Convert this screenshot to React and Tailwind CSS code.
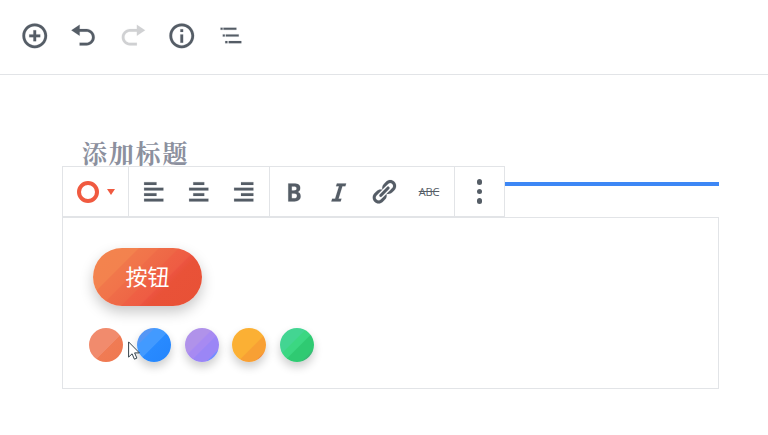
const paths = {
  insert: 'M10 1c-5 0-9 4-9 9s4 9 9 9 9-4 9-9-4-9-9-9zm0 16c-3.9 0-7-3.1-7-7s3.1-7 7-7 7 3.1 7 7-3.1 7-7 7zm1-11H9v3H6v2h3v3h2v-3h3V9h-3V6z',
  undo: 'M12 5H7V2L1 6l6 4V7h5c2.2 0 4 1.8 4 4s-1.8 4-4 4H7v2h5c3.3 0 6-2.7 6-6s-2.7-6-6-6z',
  redo: 'M8 5h5V2l6 4-6 4V7H8c-2.2 0-4 1.8-4 4s1.8 4 4 4h5v2H8c-3.3 0-6-2.7-6-6s2.7-6 6-6z',
  info: 'M10 1c-5 0-9 4-9 9s4 9 9 9 9-4 9-9-4-9-9-9zm0 16c-3.9 0-7-3.1-7-7s3.1-7 7-7 7 3.1 7 7-3.1 7-7 7zM9 5.3h2v1.9H9V5.3zM9 9h2v6H9V9z',
  outline: 'M2.6 4.1h1.5v1.6H2.6V4.1zm2.1 0h9.4v1.6H4.7V4.1zM4.2 9h1.5v1.6H4.2V9zm2.2 0h9.4v1.6H6.4V9zM6 13.9h1.6v1.6H6v-1.6zm2.5 0h9.2v1.6H8.5v-1.6z',
  left: 'M12 5V3H3v2h9zm5 4V7H3v2h14zm-5 4v-2H3v2h9zm5 4v-2H3v2h14z',
  center: 'M14 5V3H6v2h8zm3 4V7H3v2h14zm-3 4v-2H6v2h8zm3 4v-2H3v2h14z',
  right: 'M17 5V3H8v2h9zm0 4V7H3v2h14zm0 4v-2H8v2h9zm0 4v-2H3v2h14z',
  bold: 'M6 4v13h4.54c1.37 0 2.46-.33 3.26-1 .8-.66 1.2-1.58 1.2-2.77 0-.84-.17-1.51-.51-2.01s-.9-.85-1.67-1.03v-.09c.57-.1 1.02-.4 1.36-.9s.51-1.13.51-1.91c0-1.14-.39-1.98-1.17-2.5C12.75 4.26 11.5 4 9.78 4H6zm2.57 5.15V6.26h1.36c.73 0 1.27.11 1.61.32.34.22.51.58.51 1.07 0 .54-.16.92-.47 1.15s-.82.35-1.51.35h-1.5zm0 2.19h1.6c1.44 0 2.16.53 2.16 1.61 0 .6-.17 1.05-.51 1.34s-.86.43-1.57.43H8.57v-3.38z',
  italic: 'M14.78 6h-2.13l-2.8 9h2.12l-.62 2H4.6l.62-2h2.14l2.8-9H8.03l.62-2h6.75z',
  link: 'M17.74 2.76c1.68 1.69 1.68 4.41 0 6.1l-1.53 1.52c-1.12 1.12-2.7 1.47-4.14 1.09l2.62-2.61.76-.77.76-.76c.84-.84.84-2.2 0-3.04-.84-.85-2.2-.85-3.04 0l-.77.76-3.38 3.38c-.37-1.44-.02-3.02 1.1-4.14l1.52-1.53c1.69-1.68 4.42-1.68 6.1 0zM8.59 13.43l5.34-5.34c.42-.42.42-1.1 0-1.52-.44-.43-1.13-.39-1.53 0l-5.33 5.34c-.42.42-.42 1.1 0 1.52.44.43 1.13.39 1.52 0zm-.76 2.29l4.14-4.15c.38 1.44.03 3.02-1.09 4.14l-1.52 1.53c-1.69 1.68-4.41 1.68-6.1 0-1.68-1.68-1.68-4.42 0-6.1l1.53-1.52c1.12-1.12 2.7-1.47 4.14-1.1l-4.14 4.15c-.85.84-.85 2.2 0 3.05.84.84 2.2.84 3.04 0z',
};

function Icon({ name }) {
  return (
    <svg viewBox="0 0 20 20" className="size-[27.5px] shrink-0 fill-current stroke-current stroke-[0.1]">
      <path d={paths[name]} />
    </svg>
  );
}

function HeaderButton({ name, disabled }) {
  return (
    <button className={`flex h-[72px] w-[49px] items-center justify-center ${disabled ? 'text-[#d0d1d3]' : ''}`}>
      <Icon name={name} />
    </button>
  );
}

function ToolButton({ children }) {
  return <button className="flex h-full w-[45px] items-center justify-center">{children}</button>;
}

const swatches = [
  'bg-[linear-gradient(135deg,#f18b6d_0%,#f18b6d_56%,#f07b54_57%,#ef7850_100%)] shadow-none',
  'bg-[linear-gradient(135deg,#5597f5_0%,#5597f5_25%,#429aff_27%,#429aff_50%,#288aff_52%,#2485fc_100%)] shadow-[0_5px_10px_rgba(0,0,0,0.2)]',
  'bg-[linear-gradient(135deg,#b092ea_0%,#b092ea_41%,#a78af2_43%,#a78af2_56%,#9b86f6_58%,#9b86f6_80%,#738cff_82%)] shadow-[0_5px_10px_rgba(0,0,0,0.2)]',
  'bg-[linear-gradient(135deg,#fbb034_0%,#fbb034_57%,#f8a034_59%,#f8a034_82%,#f28a3c_84%)] shadow-[0_5px_10px_rgba(0,0,0,0.2)]',
  'bg-[linear-gradient(135deg,#43d592_0%,#43d592_39%,#3bd782_41%,#3bd782_54%,#2fca72_56%,#2fca72_80%,#38b974_82%)] shadow-[0_5px_10px_rgba(0,0,0,0.2)]',
];

export default function App() {
  return (
    <div className="h-[435px] w-[768px] overflow-hidden bg-white font-['Liberation_Sans','Noto_Sans_CJK_SC',sans-serif] text-[#555d66]">
      <header className="flex h-[75px] border-b border-[#e2e4e7] pl-[10px]">
        <HeaderButton name="insert" />
        <HeaderButton name="undo" />
        <HeaderButton name="redo" disabled />
        <HeaderButton name="info" />
        <HeaderButton name="outline" />
      </header>

      <main className="ml-[62px] w-[657px]">
        <h1 className="flex h-[91px] items-end pb-px pl-[20px] font-['Noto_Serif_CJK_SC','Noto_Sans_CJK_SC',serif] text-[25px] leading-[26px] font-bold tracking-[1.8px] text-[#8c909e]">
          添加标题
        </h1>

        <div className="flex h-[51px]">
          <div className="flex w-[443px] border border-[#e2e4e7] bg-white">
            <button className="flex w-[66px] items-center gap-[8px] border-r border-[#e2e4e7] pl-[14px]">
              <span className="size-[22px] rounded-full border-4 border-[#f05a40]" />
              <svg viewBox="0 0 8 6" className="h-[6px] w-[8px] fill-[#f05a40]">
                <path d="M0 0h8L4 6z" />
              </svg>
            </button>
            <div className="flex w-[141px] justify-center border-r border-[#e2e4e7]">
              <ToolButton><Icon name="left" /></ToolButton>
              <ToolButton><Icon name="center" /></ToolButton>
              <ToolButton><Icon name="right" /></ToolButton>
            </div>
            <div className="flex w-[185px] justify-center border-r border-[#e2e4e7] pr-px">
              <ToolButton><Icon name="bold" /></ToolButton>
              <ToolButton><Icon name="italic" /></ToolButton>
              <ToolButton><Icon name="link" /></ToolButton>
              <ToolButton>
                <span className="font-['Open_Sans'] text-[11px] leading-none tracking-[-0.1px] line-through">ABC</span>
              </ToolButton>
            </div>
            <button className="flex flex-1 flex-col items-center justify-center gap-[4px]">
              <span className="size-[5.5px] rounded-full bg-current" />
              <span className="size-[5.5px] rounded-full bg-current" />
              <span className="size-[5.5px] rounded-full bg-current" />
            </button>
          </div>
          <div className="mt-4 h-1 flex-1 bg-[#3d87f5]" />
        </div>

        <section className="relative h-[172px] border border-[#e2e4e7] pt-[30px]">
          <button className="ml-[30px] flex h-[58px] w-[109px] items-center justify-center rounded-full bg-[linear-gradient(135deg,#f3844e_0%,#f3824e_27%,#f1774b_28%,#f1734a_39%,#ef6c48_40%,#ee6746_51%,#ef6044_52%,#ee5c43_62%,#ec5440_63%,#e95238_68%,#e85136_100%)] pt-[2px] text-[22px] leading-none text-white shadow-[0_6px_14px_rgba(0,0,0,0.22)]">
            按钮
          </button>
          <div className="mt-[22px] ml-[26px] flex gap-[13.75px]">
            {swatches.map((style) => (
              <button key={style} className={`size-[34px] rounded-full ${style}`} />
            ))}
          </div>
          <svg viewBox="0 0 12 19" className="absolute top-[123px] left-[65px] h-[19px] w-[12px]">
            <path d="M.6.9v15.2l3.5-3.3 2.3 5.4 2.5-1.1-2.3-5.2h4.8z" fill="#fff" stroke="#34434c" />
          </svg>
        </section>
      </main>
    </div>
  );
}
